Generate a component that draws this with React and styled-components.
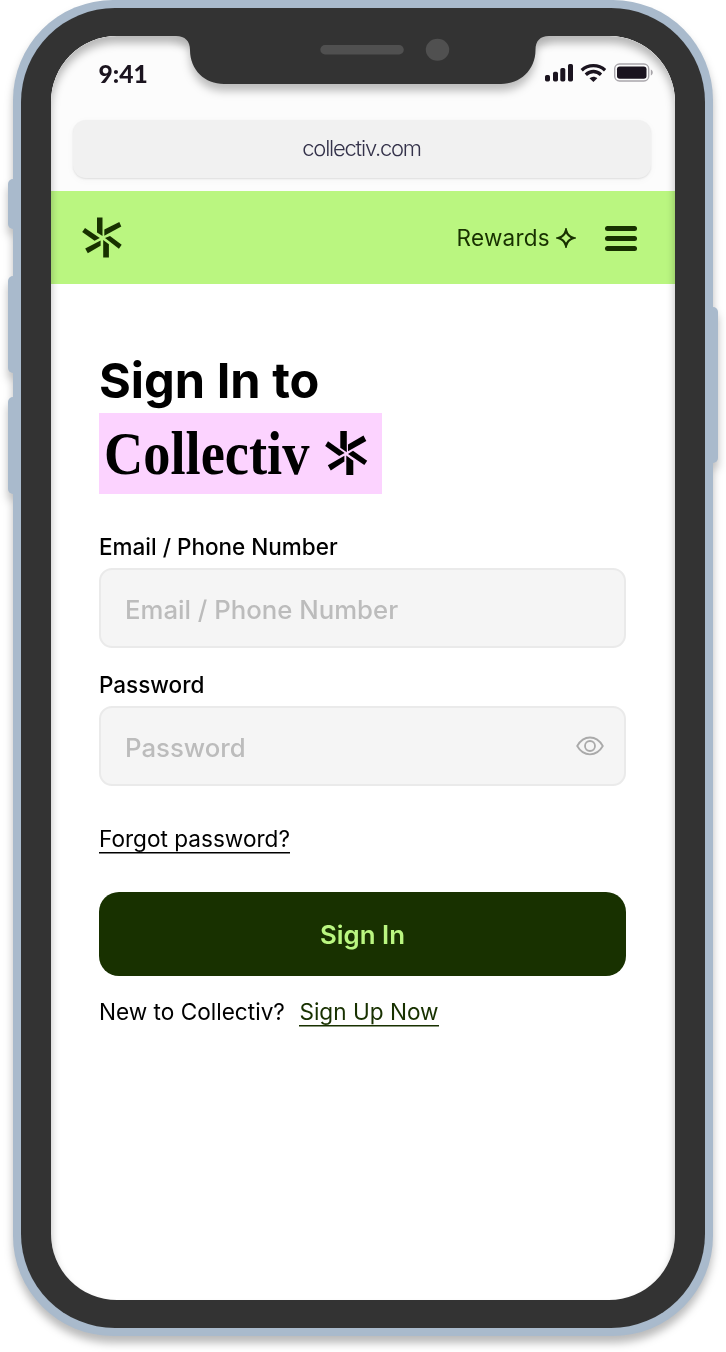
import React from "react";
import styled, { createGlobalStyle } from "styled-components";

const GlobalStyle = createGlobalStyle`
  * { box-sizing: border-box; }
  body { margin: 0; background: #fff; font-family: Inter, "Liberation Sans", sans-serif; overflow: hidden; }
  h1, p { margin: 0; }
`;

const Stage = styled.div`
  height: 1352px;
  width: 726px;
  padding-left: 13px;
  background: #fff;
  overflow: hidden;
`;

const Device = styled.div`
  position: relative;
  width: 700px;
  height: 1336px;
  padding: 8px;
  border-radius: 100px;
  background: #a9bacc;
  filter: drop-shadow(0 7px 4px rgba(0, 0, 0, 0.27));
`;

const SideKey = styled.i`
  position: absolute;
  top: ${(p) => p.$top}px;
  ${(p) => p.$side}: -5px;
  width: 9px;
  height: ${(p) => p.$height}px;
  border-radius: ${(p) => (p.$side === "left" ? "5px 0 0 5px" : "0 5px 5px 0")};
  background: #a9bacc;
`;

const Bezel = styled.div`
  position: relative;
  height: 1320px;
  padding: 28px 30.5px 28px 30.3px;
  border-radius: 94px;
  background: #333;
`;

const Screen = styled.div`
  position: relative;
  height: 1264px;
  border-radius: 66px;
  overflow: hidden;
  background: #fff;
  display: flex;
  flex-direction: column;
`;

const Shade = styled.div`
  position: absolute;
  inset: 0;
  z-index: 3;
  border-radius: 66px;
  box-shadow: inset 0 7px 8px rgba(0, 0, 0, 0.28);
  pointer-events: none;
`;

const Notch = styled.svg`
  position: absolute;
  z-index: 4;
  top: -2px;
  left: 124.7px;
  filter: drop-shadow(0 7px 4px rgba(0, 0, 0, 0.25));
  overflow: visible;
`;

const BrowserChrome = styled.div`
  height: 154.5px;
  padding: 0 24px 0 21.3px;
  background: #fcfcfc;
`;

const StatusBar = styled.div`
  height: 83.6px;
  padding: 22px 0 0 26px;
  display: flex;
  justify-content: space-between;
`;

const Time = styled.span`
  font: 900 24.6px/32px Lato, sans-serif;
  color: #1b141f;
`;

const Indicators = styled.svg`
  margin: 5px -3.7px 0 0;
`;

const AddressBar = styled.div`
  height: 58px;
  padding-bottom: 1px;
  border-radius: 13px;
  background: #f1f1f1;
  box-shadow: 0 1px 2px rgba(0, 0, 0, 0.1), 0 2px 8px rgba(0, 0, 0, 0.03);
  display: flex;
  align-items: center;
  justify-content: center;
  font-size: 22px;
  font-weight: 300;
  letter-spacing: -1.22px;
  color: #34324a;
`;

const Header = styled.header`
  height: 93.5px;
  padding: 1px 37.5px 0 30.5px;
  display: flex;
  align-items: center;
  background: #baf680;
  color: #183100;
`;

const Rewards = styled.span`
  margin-left: auto;
  display: flex;
  align-items: center;
  gap: 6px;
  font-size: 22.5px;
  letter-spacing: 0.25px;
`;

const Menu = styled.div`
  margin: 1px 0 0 28.5px;
  width: 32.5px;
  display: grid;
  gap: 5px;
`;

const MenuLine = styled.i`
  height: 5px;
  border-radius: 2.5px;
  background: currentColor;
`;

const Form = styled.main`
  padding: 67px 48.5px 0 47.7px;
  display: flex;
  flex-direction: column;
  align-items: flex-start;
`;

const Title = styled.h1`
  font-size: 48.7px;
  line-height: 60px;
  font-weight: 700;
`;

const Brand = styled.div`
  margin: 2.3px 0 38.2px;
  width: 282.8px;
  height: 80.5px;
  padding: 0 13.7px 1.5px 5px;
  display: flex;
  align-items: center;
  justify-content: space-between;
  background: #fcd3ff;
`;

const Wordmark = styled.span`
  width: 206px;
  font: 700 62px/80px "Liberation Serif", serif;
  transform: scaleX(0.877);
  transform-origin: left;
`;

const Label = styled.label`
  font-size: 22.5px;
  line-height: 30px;
  font-weight: 500;
`;

const Field = styled.div`
  margin: 6.1px 0 ${(p) => p.$after}px;
  width: 100%;
  height: 80px;
  padding: 3px 20px 0 24px;
  display: flex;
  align-items: center;
  justify-content: space-between;
  border: 2px solid #eaeaea;
  border-radius: 13px;
  background: #f5f5f5;
  color: #bcbcbc;
  font-size: 25.75px;
  font-weight: 500;

  svg {
    margin-top: -3px;
  }
`;

const TextLink = styled.a`
  line-height: 26px;
  font-size: 22.6px;
  color: ${(p) => p.$color || "#000"};
  box-shadow: 0 1.5px currentColor;
`;

const Submit = styled.button`
  margin: 40.2px 0 23.3px;
  width: 100%;
  height: 83.5px;
  padding: 1px 0 0;
  border: 0;
  border-radius: 20px;
  background: #183100;
  color: #baf680;
  font: 600 25.8px Inter, sans-serif;
`;

const SignUp = styled.p`
  display: flex;
  gap: 14.5px;
  line-height: 26px;
  font-size: 22.6px;
`;

const Burst = () => (
  <svg width="40" height="40" viewBox="0 0.5 40 40" fill="currentColor" overflow="visible">
    <path d="M15 0h5.5v18.4L15 15z" />
    <path d="M22.3 12 37.3 4.6l2 4.5-17 9.1z" />
    <path d="M3 10.5 17.8 20.6l-5.2 2.6L.2 14.5z" />
    <path d="m23 20.6 5-2 11.7 8.6-2.8 4z" />
    <path d="M3.2 31 18.6 23v5.2L5.8 35.7z" />
    <path d="m21.2 22.6 5.7 4.2V40h-5.7z" />
  </svg>
);

const BrandBurst = () => (
  <svg width="43" height="44" viewBox="0 0 43 44" fill="currentColor">
    <path d="M15.3 0h6.5v21.2l-6.5-4.4z" />
    <path d="M23 13.6 38.5 4.6l2.8 5.4L23 20.2z" />
    <path d="M3 10.2 19.6 22l-5.4 3L.2 15z" />
    <path d="m23 23 5-3.3 14.2 10-2.9 4.4z" />
    <path d="m2.8 34.3 16.6-9.6v5.7L5.8 39.4z" />
    <path d="m21.3 24.6 7 5.2V44h-7z" />
  </svg>
);

const Sparkle = () => (
  <svg width="20" height="20" viewBox="0 0 20 20" fill="none" stroke="currentColor" strokeWidth="2.3">
    <path d="M10 2.2C11.2 6.8 13.2 8.8 17.8 10 13.2 11.2 11.2 13.2 10 17.8 8.8 13.2 6.8 11.2 2.2 10 6.8 8.8 8.8 6.8 10 2.2Z" />
  </svg>
);

const Eye = () => (
  <svg width="28" height="20" viewBox="0 0 28 20" fill="none" stroke="#aaa" strokeWidth="1.8">
    <path d="M1.2 10C4.4 4.4 8.6 1.5 14 1.5S23.6 4.4 26.8 10C23.6 15.6 19.4 18.3 14 18.3S4.4 15.6 1.2 10Z" />
    <circle cx="14" cy="10" r="5" />
  </svg>
);

const StatusIcons = () => (
  <Indicators width="110" height="20" viewBox="0 0 110 20" fill="#1b141f">
    <rect x="1" y="12" width="5" height="6.5" rx="1.7" />
    <rect x="9" y="8.7" width="5" height="9.8" rx="1.7" />
    <rect x="16.3" y="5" width="5" height="13.5" rx="1.7" />
    <rect x="24" y="1" width="5" height="17.5" rx="1.7" />
    <g fill="none" stroke="#1b141f" strokeWidth="3.3">
      <path d="M37.7 7.2C44.2 1 54.6 1 61.1 7.2" />
      <path d="M41.8 11.7c4.6-4.3 10.7-4.3 15.2 0" />
    </g>
    <path d="M45.5 15.2c2.4-2 5.4-2 7.8 0l-3.9 3.8z" />
    <rect x="70.7" y="1" width="34" height="17" rx="4.8" fill="none" stroke="#a8a5aa" strokeWidth="1.4" />
    <rect x="73" y="3.4" width="29.5" height="12.4" rx="2.8" />
    <path d="M106.8 6.6c2.6.9 2.6 5 0 6z" fill="#a8a5aa" />
  </Indicators>
);

export default function App() {
  return (
    <Stage>
      <GlobalStyle />
      <Device>
        <SideKey $side="left" $top={179} $height={50} />
        <SideKey $side="left" $top={276} $height={97} />
        <SideKey $side="left" $top={397} $height={97} />
        <SideKey $side="right" $top={307} $height={156} />
        <Bezel>
          <Screen>
            <BrowserChrome>
              <StatusBar>
                <Time>9:41</Time>
                <StatusIcons />
              </StatusBar>
              <AddressBar>collectiv.com</AddressBar>
            </BrowserChrome>
            <Header>
              <Burst />
              <Rewards>
                Rewards <Sparkle />
              </Rewards>
              <Menu>
                <MenuLine />
                <MenuLine />
                <MenuLine />
              </Menu>
            </Header>
            <Form>
              <Title>Sign In to</Title>
              <Brand>
                <Wordmark>Collectiv</Wordmark>
                <BrandBurst />
              </Brand>
              <Label>Email / Phone Number</Label>
              <Field $after={22.2}>Email / Phone Number</Field>
              <Label>Password</Label>
              <Field $after={39.5}>
                Password <Eye />
              </Field>
              <TextLink>Forgot password?</TextLink>
              <Submit>Sign In</Submit>
              <SignUp>
                New to Collectiv? <TextLink $color="#183100">Sign Up Now</TextLink>
              </SignUp>
            </Form>
            <Shade />
            <Notch width="373" height="50" viewBox="0 0 373 50">
              <path d="M0 0H373V2C364 2 359.5 7 359.5 16C359.5 36 344 50 325 50H48C29 50 14 36 14 16C14 7 9 2 0 2Z" fill="#333" />
              <rect x="144.3" y="11" width="83.5" height="9.5" rx="4.7" fill="#505050" />
              <ellipse cx="261.5" cy="15.8" rx="11.7" ry="11" fill="#505050" />
            </Notch>
          </Screen>
        </Bezel>
      </Device>
    </Stage>
  );
}
